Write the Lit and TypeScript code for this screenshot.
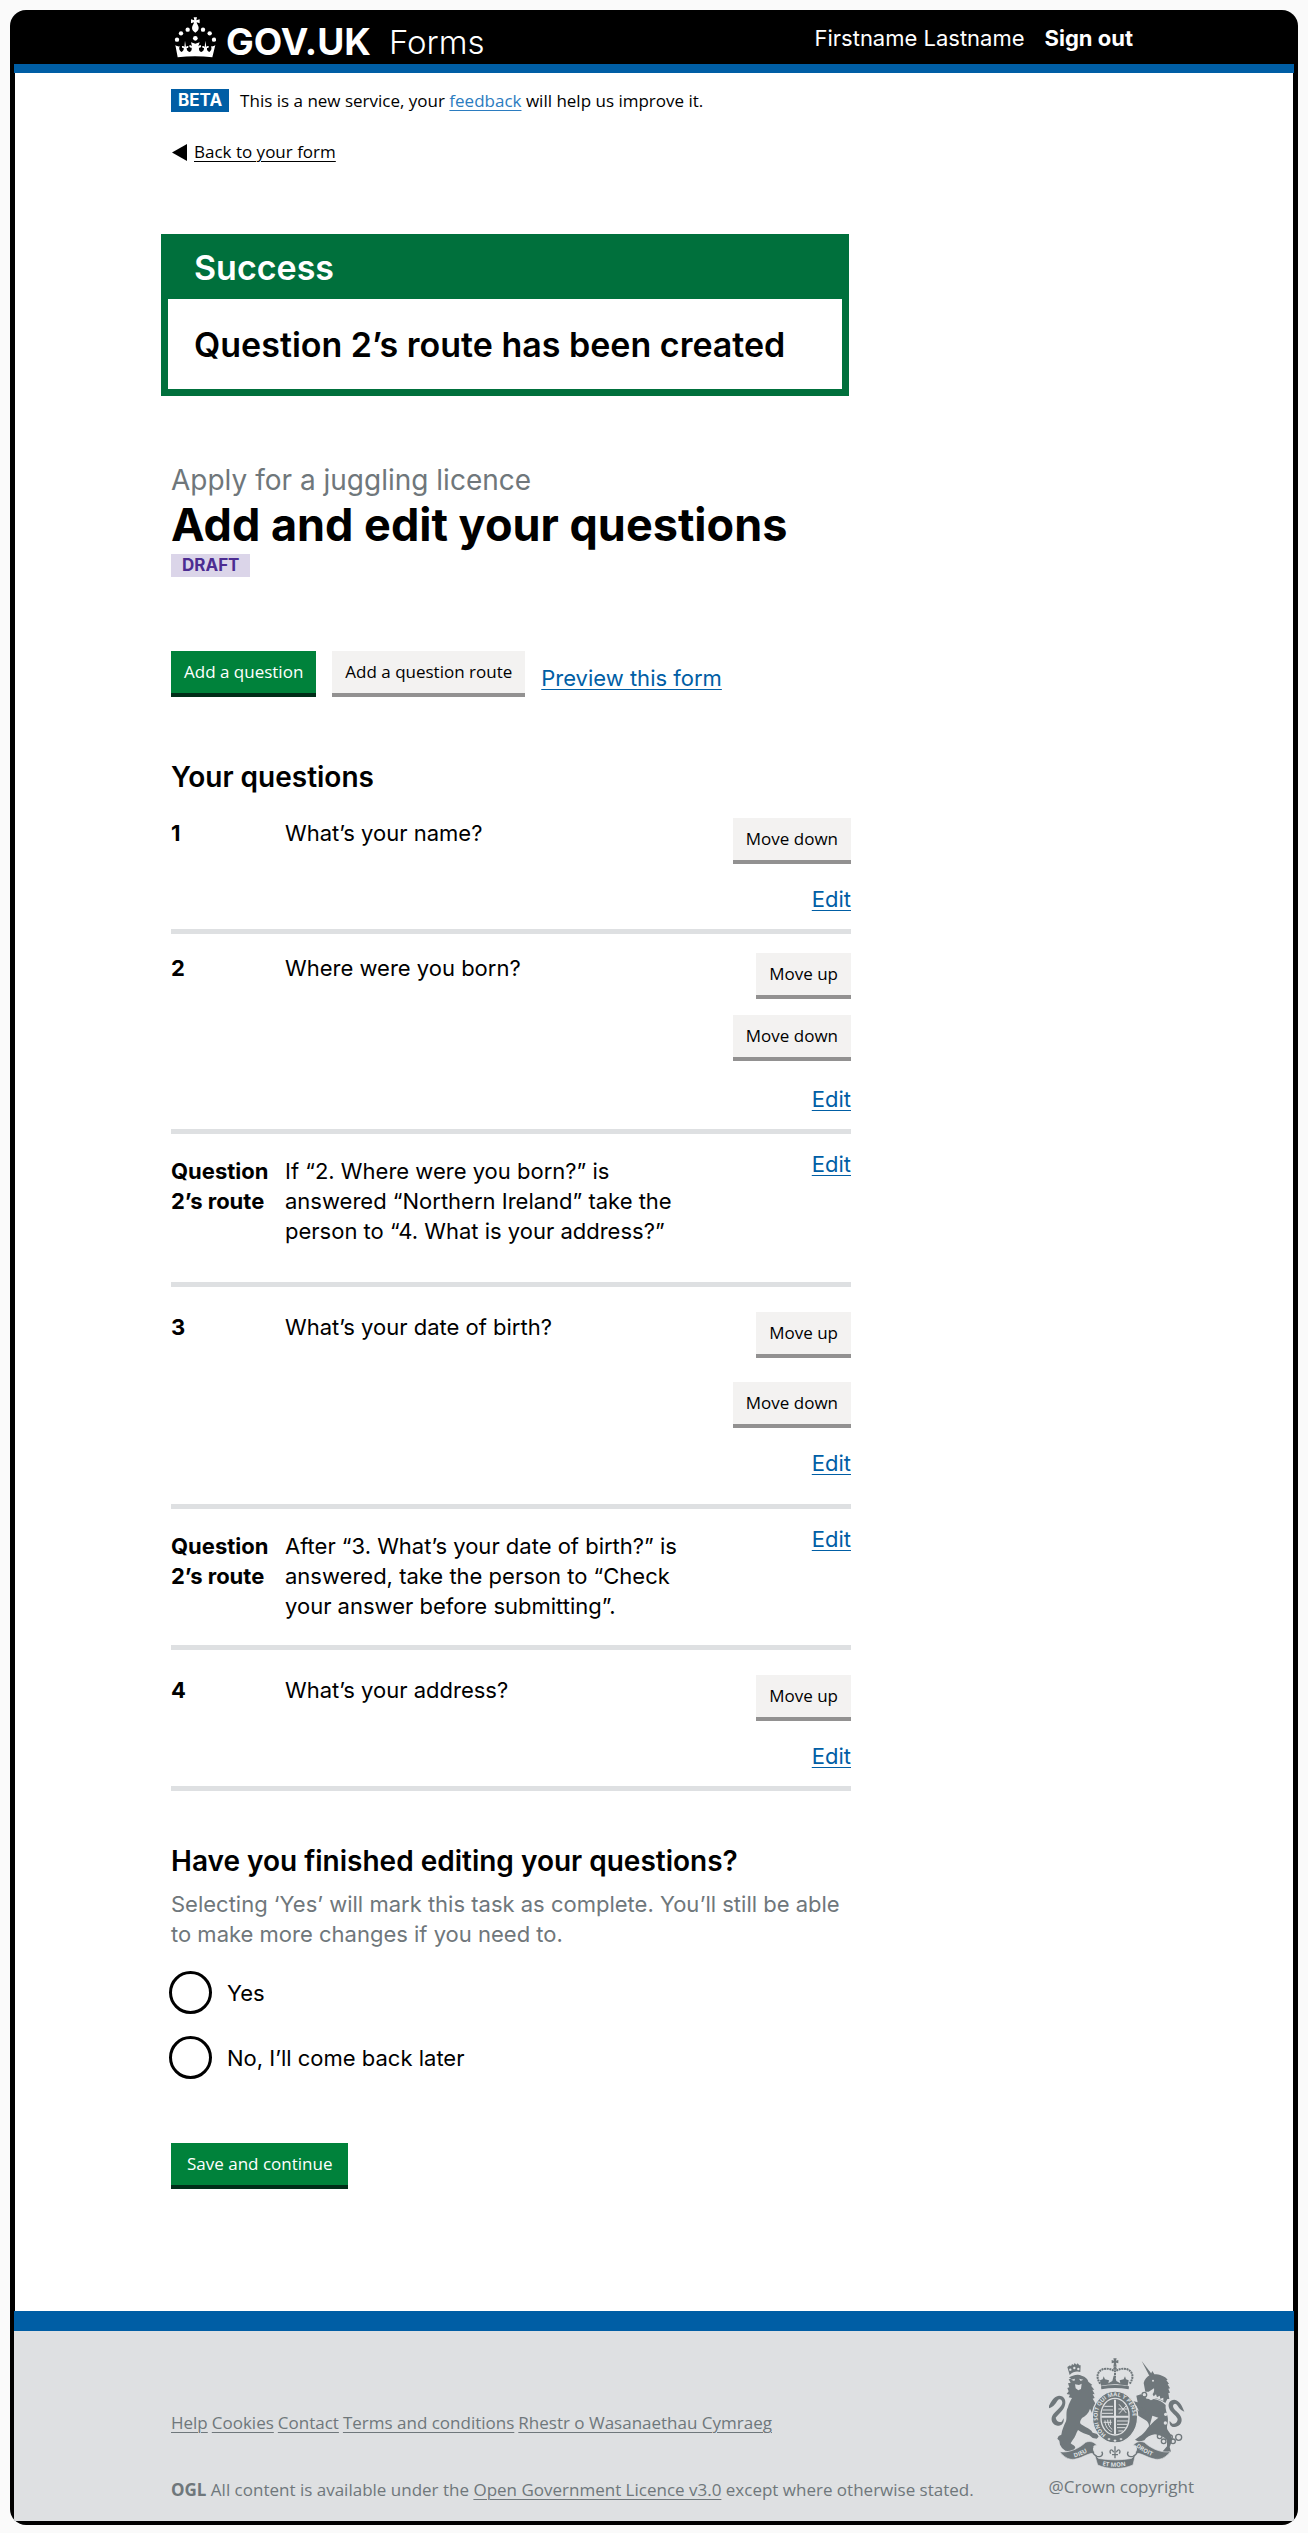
import { LitElement, html, css, svg, nothing } from "lit";
import { customElement, property, state } from "lit/decorators.js";
import { classMap } from "lit/directives/class-map.js";

type Spacing = "compact" | "roomy";

interface QuestionItem {
  kind: "question";
  number: number;
  text: string;
  up: boolean;
  down: boolean;
  spacing: Spacing;
}

interface RouteItem {
  kind: "route";
  label: string;
  text: string;
  spacing: Spacing;
}

type Item = QuestionItem | RouteItem;

const ITEMS: Item[] = [
  { kind: "question", number: 1, text: "What’s your name?", up: false, down: true, spacing: "compact" },
  { kind: "question", number: 2, text: "Where were you born?", up: true, down: true, spacing: "compact" },
  {
    kind: "route",
    label: "Question 2’s route",
    text: "If “2. Where were you born?” is answered “Northern Ireland” take the person to “4. What is your address?”",
    spacing: "roomy",
  },
  { kind: "question", number: 3, text: "What’s your date of birth?", up: true, down: true, spacing: "roomy" },
  {
    kind: "route",
    label: "Question 2’s route",
    text: "After “3. What’s your date of birth?” is answered, take the person to “Check your answer before submitting”.",
    spacing: "compact",
  },
  { kind: "question", number: 4, text: "What’s your address?", up: true, down: false, spacing: "roomy" },
];

const FOOTER_LINKS = ["Help", "Cookies", "Contact", "Terms and conditions", "Rhestr o Wasanaethau Cymraeg"];

const base = css`
  *,
  *::before,
  *::after {
    box-sizing: border-box;
  }
  h1,
  h2,
  p,
  ol,
  ul,
  fieldset,
  legend {
    margin: 0;
    padding: 0;
    border: 0;
  }
  a {
    color: #005ea5;
    text-decoration: underline;
    text-decoration-thickness: 1px;
    text-underline-offset: 3px;
  }
`;

const buttons = css`
  .button {
    display: block;
    height: 46px;
    padding: 0 13px;
    border: 0;
    border-bottom: 4px solid #929191;
    border-radius: 0;
    background: #f3f2f1;
    color: #000;
    font: 400 17px/42px "Open Sans", sans-serif;
    white-space: nowrap;
    cursor: pointer;
  }
  .button.primary {
    background: #00823b;
    border-bottom-color: #002d18;
    color: #fff;
  }
  .button.wide {
    padding: 0 16px;
  }
`;

@customElement("crown-logo")
export class CrownLogo extends LitElement {
  static styles = css`
    :host {
      display: block;
      width: 42px;
      height: 41px;
    }
    svg {
      display: block;
      width: 100%;
      height: 100%;
    }
  `;

  render() {
    return html`<svg viewBox="25 23 126 123" fill="#fff" aria-hidden="true">
      <path d="M84 24h10l-2 9 10-3v12l-9-3c0 5 6 10 6 17 0 6-5 11-10 14-5-3-10-8-10-14 0-7 6-12 6-17l-9 3V30l10 3z" />
      <circle cx="66" cy="61" r="6.5" /><circle cx="112" cy="61" r="6.5" />
      <circle cx="46" cy="72" r="6.5" /><circle cx="132" cy="72" r="6.5" />
      <circle cx="34" cy="91" r="6.5" /><circle cx="145" cy="91" r="6.5" />
      <circle cx="89" cy="87" r="7" />
      <path
        d="M29 107c5 4 9 5 13 4-3 7-1 13 5 17 6-2 8-7 7-12-4 1-6-2-5-6 4-1 6 0 7 3l2-19 3 19c1-3 4-4 7-3 1 5-1 7-5 6 0 6 2 10 8 12 6-2 8-7 7-13-5 1-8-2-7-7 4-1 6 1 8 3l-3-12 13 4 13-4-4 12c2-2 5-4 8-3 2 5-2 8-6 7-1 6 1 11 7 13 6-2 8-6 8-12-4 1-6-2-5-6 3-1 6 0 7 3l2-19 3 19c1-3 4-4 7-3 1 4-1 7-5 6-1 5 1 10 7 12 6-4 8-10 5-17 4 1 8 0 13-4l-9 37c-34-4-70-4-104 0z"
      />
    </svg>`;
  }
}

@customElement("royal-crest")
export class RoyalCrest extends LitElement {
  static styles = css`
    :host {
      display: block;
      width: 136px;
      height: 111px;
    }
    svg {
      display: block;
      width: 100%;
      height: 100%;
      overflow: visible;
    }
    .letters {
      font-family: "Open Sans", sans-serif;
      font-weight: 700;
      fill: #dee0e2;
    }
    .motto {
      font-size: 18px;
    }
    .garter {
      font-size: 17px;
    }
  `;

  private lion() {
    return svg`
      <g fill="#6f777b">
        <path d="M122 104l-7-24 8-5 3 3 3-7 5 3 3-6 5 5 4-4 5 6 4 0-1 20c-10-3-21-2-32 9z" />
        <path d="M120 112c8-6 26-12 38-6 12 4 18 10 20 18l12 10-4 2 10 12-6 0 7 14-6-1 6 12-6 2c6 8 10 18 12 30 0 10-3 18-4 26-8-6-12-18-16-26-4 14-14 22-24 28-4 6-8 12-4 18l16 10c8 4 16 8 20 16l14 4 4 8-6 6-12-2-10-8c-10-4-24-8-34-16-6 10-8 22-16 30l-6 10c4 4 12 6 14 12l-4 8-12 4-14-2-10-8-6-10-2-12-6-6 4-8 8-4c2-14 8-28 14-40 4-12-2-28 6-42 2-10 8-20 12-28l-10-2 4-8-10-2 6-8-4-10 6-2-4-12 8-2-6-10 8-2z" />
        <path d="M60 196c8-14 14-28 30-30 16 0 22 14 18 28-4 16-18 26-28 38 2 10 10 16 18 12l6-10c2 14-6 24-18 22-16-2-22-18-16-30 8-14 26-22 30-38 0-8-6-14-12-10-8 8-10 20-28 26z" />
      </g>
      <g fill="#dee0e2">
        <circle cx="124" cy="88" r="3.5" /><circle cx="136" cy="83" r="3.5" /><circle cx="148" cy="86" r="3.5" />
        <path d="M126 118l12-3-2 7zM150 115l13 3-8 4zM138 132l12 2 8-4-2 16-8 4-8-6z" />
      </g>`;
  }

  private unicorn() {
    return svg`
      <g fill="#6f777b">
        <path d="M338 62l34 44-8 6z" />
        <path d="M344 128c2-10 10-20 20-24l6-12 6 10c16 0 32 6 40 16l-4 2 8 10-4 2 7 12-5 1 5 12-5 1 3 18-6 0-6 12c-14-10-28-16-46-16 8-12 14-14 12-28l-16 10-10 0z" />
        <path d="M322 166l14-4 8 6 22 12 8-4c14 2 26 8 36 18-2 12 4 24 6 36 4 20-8 30 2 42 8 10 12 20 10 32l-6 16 4 14-14 6-12-6 14-16 0-18c-10-12-22-16-36-18-14 2-26 8-32 18l-16 4-12-6 14-10c14-8 20-20 28-30 0-8-4-14-10-18l-22-14c-8-4-8-12-6-20l8 6-8-16-14-6 4-8 14 4z" />
        <path d="M466 214c-6-16-14-34-30-36-14 0-20 12-16 24 4 14 22 22 26 34 0 10-8 16-16 14l-8-8c-2 12 6 20 16 18 16-2 24-16 18-30-6-14-22-20-24-32 0-6 6-10 10-6 8 8 8 16 24 22z" />
      </g>
      <g fill="#dee0e2">
        <circle cx="372" cy="121" r="3" />
        <path d="M352 170l8-8 4 6 6-8 4 8 7-6 3 9 8-5 2 9 9-3 0 10c-16-8-34-12-51-6z" />
        <path d="M370 226l18 6-12 10-14 14z" />
      </g>
      <g fill="none" stroke="#6f777b" stroke-width="4">
        <circle cx="346" cy="163" r="7" /><circle cx="340" cy="210" r="7" />
        <circle cx="392" cy="288" r="7" /><circle cx="404" cy="303" r="7" /><circle cx="424" cy="290" r="6" />
        <circle cx="432" cy="303" r="7" /><circle cx="449" cy="291" r="9" />
      </g>
      <g fill="#dee0e2"><circle cx="410" cy="222" r="5" /><circle cx="409" cy="248" r="5" /></g>`;
  }

  private crown() {
    return svg`
      <g fill="#6f777b">
        <path d="M253 54h10l-2 7 7-2v10l-7-2 2 12h-10l2-12-7 2V59l7 2z" />
        <circle cx="258" cy="84" r="5" />
        <path d="M213 120l8-3 3-9 4 9 12 3-2 9 12-7 4-16 4 0 4 16 12 7-2-9 12-3 4-9 3 9 8 3-3 16c-28-6-54-6-80 0z" />
        <path d="M216 138c28-5 56-5 84 0l-1 9c-28-5-54-5-82 0z" />
      </g>
      <g fill="none" stroke="#6f777b" stroke-width="6" stroke-dasharray="6 2">
        <path d="M214 130c-24-32 8-58 42-38" />
        <path d="M302 130c24-32-8-58-42-38" />
        <path d="M258 90v22" />
      </g>`;
  }

  private shield() {
    return svg`
      <ellipse cx="258" cy="230" rx="68" ry="78" fill="#6f777b" stroke="#dee0e2" stroke-width="4" />
      <path d="M216 224a42 50 0 0 1 84 0v10a42 50 0 0 1-84 0z" fill="#6f777b" stroke="#dee0e2" stroke-width="4" />
      <path d="M258 178v104M217 229h82" stroke="#dee0e2" stroke-width="6" />
      <g stroke="#dee0e2" stroke-width="3" fill="none">
        <path d="M226 198h26M221 209h31M219 219h33M264 242h33M264 252h31M264 262h26M268 272h14" />
        <path d="M270 192l22 26M292 196l-22 24M268 206h28" />
        <path d="M228 240c0 14 6 28 20 34M236 238c0 12 4 22 14 30M244 238v16M224 246h24" />
      </g>
      <path id="garter-path" d="M231 283A53 62 0 1 1 286 283" fill="none" />
      <text class="letters garter"><textPath href="#garter-path">HONI SOIT QUI MAL Y PENSE</textPath></text>
      <g fill="#dee0e2">
        <path d="M240 293l5 3-5 4-5-4zM258 297l5 4-5 4-5-4zM276 293l5 3-5 4-5-4z" />
      </g>`;
  }

  private ribbon() {
    return svg`
      <g fill="#6f777b" stroke="#dee0e2" stroke-width="2">
        <path d="M92 334c24 4 54-6 78-28 14-6 28 0 34 10-8-2-14 2-12 10l6 14c-20-6-44 20-72 17-14-2-26-12-34-23z" />
        <path d="M424 334c-24 4-54-6-78-28-14-6-28 0-34 10 8-2 14 2 12 10l-6 14c20-6 44 20 72 17 14-2 26-12 34-23z" />
        <path d="M196 340l12 14c32 6 68 6 100 0l12-14-8 34c-32 14-74 14-106 0z" />
      </g>
      <g fill="none" stroke="#6f777b" stroke-width="4">
        <path d="M192 318c-6 12-2 24 12 30 14 4 20-6 14-14M324 318c6 12 2 24-12 30-14 4-20-6-14-14" />
        <path d="M258 318v36M249 343h18M245 340c-6-12 4-16 9-4M271 340c6-12-4-16-9-4" />
      </g>
      <path id="ribbon-left" d="M136 351c20-4 40-14 60-30" fill="none" />
      <path id="ribbon-mid" d="M220 375c26 6 54 6 86 -1" fill="none" />
      <path id="ribbon-right" d="M320 319c20 16 42 28 66 34" fill="none" />
      <text class="letters motto"><textPath href="#ribbon-left">DIEU</textPath></text>
      <text class="letters motto"><textPath href="#ribbon-mid">ET MON</textPath></text>
      <text class="letters motto"><textPath href="#ribbon-right">DROIT</textPath></text>`;
  }

  render() {
    return html`<svg viewBox="60 53 408 333" role="img" aria-label="Royal coat of arms">
      ${this.lion()} ${this.unicorn()} ${this.crown()} ${this.shield()} ${this.ribbon()}
    </svg>`;
  }
}

@customElement("question-row")
export class QuestionRow extends LitElement {
  @property({ attribute: false }) item!: Item;

  static styles = [
    base,
    buttons,
    css`
      :host {
        display: block;
      }
      .row {
        display: grid;
        grid-template-columns: 100px minmax(0, 1fr) auto;
        column-gap: 14px;
        align-items: start;
        padding: 19px 0 15px;
        border-bottom: 5px solid #dee0e2;
      }
      .row.roomy {
        padding: 25px 0 15px;
      }
      .row.roomy.both {
        padding-bottom: 26px;
      }
      .row.route {
        padding: 15px 0 24px;
      }
      .row.route.roomy {
        padding-bottom: 36px;
      }
      .label {
        font-weight: 700;
        white-space: nowrap;
      }
      .text {
        max-width: 410px;
      }
      .route .label,
      .route .text {
        margin-top: 7px;
      }
      .route .label {
        white-space: normal;
      }
      .actions {
        display: flex;
        flex-direction: column;
        align-items: flex-end;
      }
      .button + .button {
        margin-top: 16px;
      }
      .roomy .button + .button {
        margin-top: 24px;
      }
      .button + a {
        margin-top: 20px;
      }
      .compact .button + .button + a {
        margin-top: 23px;
      }
    `,
  ];

  render() {
    const item = this.item;
    const isRoute = item.kind === "route";
    const classes = {
      row: true,
      route: isRoute,
      both: item.kind === "question" && item.up && item.down,
      compact: item.spacing === "compact",
      roomy: item.spacing === "roomy",
    };
    return html`<div class=${classMap(classes)}>
      <div class="label">${isRoute ? item.label : item.number}</div>
      <div class="text">${item.text}</div>
      <div class="actions">
        ${item.kind === "question" && item.up ? html`<button class="button" type="button">Move up</button>` : nothing}
        ${item.kind === "question" && item.down ? html`<button class="button" type="button">Move down</button>` : nothing}
        <a href="#edit">Edit</a>
      </div>
    </div>`;
  }
}

@customElement("app-root")
export class AppRoot extends LitElement {
  @state() private finished = "";

  static styles = [
    base,
    buttons,
    css`
      :host {
        display: block;
        min-height: 100vh;
        padding: 10px;
        box-sizing: border-box;
        background: #fafafa;
        color: #000;
        font: 400 22px/30px Inter, sans-serif;
      }
      .frame {
        padding: 0 4px 4px;
        border-radius: 16px;
        background: #000;
        overflow: hidden;
      }
      .bar {
        display: flex;
        align-items: flex-start;
        padding: 10px 100px 0 157px;
        border-bottom: 9px solid #005ea5;
        color: #fff;
      }
      .bar-inner {
        display: flex;
        align-items: flex-start;
        justify-content: space-between;
        flex: 1;
        max-width: 962px;
      }
      .brand {
        display: flex;
        align-items: flex-start;
        padding-left: 3px;
        color: #fff;
        text-decoration: none;
        line-height: 44px;
      }
      .logotype {
        margin-left: 10px;
        font-size: 37px;
        font-weight: 700;
      }
      .product {
        margin-left: 18px;
        font-size: 33px;
        font-weight: 300;
      }
      .brand crown-logo {
        margin-top: -3px;
      }
      .account {
        display: flex;
        gap: 20px;
        padding-top: 3px;
      }
      .account a {
        color: #fff;
        font-weight: 700;
        text-decoration: none;
      }
      .page {
        margin: 0 1px;
        padding: 16px 16px 122px 156px;
        background: #fff;
      }
      .column {
        max-width: 680px;
      }
      .phase {
        display: flex;
        gap: 11px;
        font: 400 17px/23px "Open Sans", sans-serif;
      }
      .phase a {
        color: #2b7cc0;
      }
      .tag {
        display: inline-block;
        padding: 0 7px;
        background: #005ea5;
        color: #fff;
        font: 700 17px/23px Inter, sans-serif;
      }
      .tag.draft {
        display: block;
        width: fit-content;
        margin-top: 2px;
        padding: 0 11px;
        background: #dbd5e9;
        color: #4c2c92;
      }
      .back {
        display: flex;
        align-items: center;
        gap: 7px;
        width: fit-content;
        margin-top: 28px;
        padding-left: 1px;
        color: #000;
        font: 400 17px/24px "Open Sans", sans-serif;
      }
      .back svg {
        width: 15px;
        height: 17px;
      }
      .notice {
        margin: 70px 2px 0 -10px;
        border: 7px solid #00703c;
        border-top: 0;
      }
      .notice h2 {
        padding: 14px 26px 11px;
        background: #00703c;
        color: #fff;
      }
      .notice p {
        padding: 26px 26px 24px;
      }
      .notice h2,
      .notice p {
        font-size: 34px;
        font-weight: 600;
        line-height: 40px;
      }
      .caption {
        margin-top: 67px;
        color: #6f777b;
        font-size: 28px;
        line-height: 35px;
      }
      h1 {
        font-size: 45px;
        font-weight: 700;
        line-height: 54px;
      }
      .toolbar {
        display: flex;
        align-items: flex-start;
        gap: 16px;
        margin-top: 74px;
      }
      .toolbar a {
        margin-top: 12px;
      }
      .subhead {
        font-size: 28px;
        font-weight: 600;
        line-height: 36px;
      }
      .list-title {
        margin: 62px 0 4px;
      }
      .questions {
        list-style: none;
      }
      fieldset {
        min-width: 0;
        margin-top: 52px;
      }
      .hint {
        margin-top: 10px;
        color: #6f777b;
      }
      .radios {
        display: flex;
        flex-direction: column;
        align-items: flex-start;
        gap: 22px;
        margin: 22px 0 0 -2px;
      }
      .radio {
        display: flex;
        align-items: center;
        gap: 15px;
      }
      .radio input {
        appearance: none;
        width: 43px;
        height: 43px;
        margin: 0;
        border: 3px solid #000;
        border-radius: 50%;
        background: #fff;
      }
      .radio input:checked {
        background: radial-gradient(#000 0 11px, #fff 12px);
      }
      .save {
        margin-top: 64px;
      }
      .foot {
        display: flex;
        padding: 27px 100px 19px 157px;
        border-top: 20px solid #005ea5;
        background: #dee0e2;
        color: #6f777b;
        font: 400 17px/24px "Open Sans", sans-serif;
      }
      .foot a {
        color: #6f777b;
      }
      .foot-inner {
        display: flex;
        flex: 1;
        justify-content: space-between;
        max-width: 1026px;
      }
      .legal {
        display: flex;
        flex-direction: column;
        gap: 43px;
        padding-top: 53px;
      }
      .links {
        display: flex;
        flex-wrap: wrap;
        gap: 4px;
        list-style: none;
      }
      .crown-copyright {
        display: flex;
        flex-direction: column;
        gap: 6px;
      }
    `,
  ];

  private pick(event: Event) {
    this.finished = (event.target as HTMLInputElement).value;
  }

  private radio(value: string, label: string) {
    return html`<div class="radio">
      <input
        type="radio"
        name="finished"
        id="finished-${value}"
        value=${value}
        .checked=${this.finished === value}
        @change=${this.pick}
      />
      <label for="finished-${value}">${label}</label>
    </div>`;
  }

  render() {
    return html`<div class="frame">
      <header class="bar">
        <div class="bar-inner">
          <a class="brand" href="#home">
            <crown-logo></crown-logo>
            <span class="logotype">GOV.UK</span>
            <span class="product">Forms</span>
          </a>
          <div class="account"><span>Firstname Lastname</span><a href="#sign-out">Sign out</a></div>
        </div>
      </header>

      <div class="page">
        <div class="column">
          <div class="phase">
            <strong class="tag">BETA</strong>
            <span>This is a new service, your <a href="#feedback">feedback</a> will help us improve it.</span>
          </div>
          <a class="back" href="#form">
            <svg viewBox="0 0 15 17" aria-hidden="true"><path d="M0 8.500L15 0v17z" fill="#000" /></svg>
            <span>Back to your form</span>
          </a>

          <main>
            <section class="notice" role="alert">
              <h2>Success</h2>
              <p>Question 2’s route has been created</p>
            </section>

            <p class="caption">Apply for a juggling licence</p>
            <h1>Add and edit your questions</h1>
            <strong class="tag draft">DRAFT</strong>

            <div class="toolbar">
              <button class="button primary" type="button">Add a question</button>
              <button class="button" type="button">Add a question route</button>
              <a href="#preview">Preview this form</a>
            </div>

            <h2 class="subhead list-title">Your questions</h2>
            <ol class="questions">
              ${ITEMS.map((item) => html`<li><question-row .item=${item}></question-row></li>`)}
            </ol>

            <form @submit=${(e: Event) => e.preventDefault()}>
              <fieldset>
                <legend class="subhead">Have you finished editing your questions?</legend>
                <p class="hint">
                  Selecting ‘Yes’ will mark this task as complete. You’ll still be able to make more changes if you need to.
                </p>
                <div class="radios">${this.radio("yes", "Yes")} ${this.radio("no", "No, I’ll come back later")}</div>
              </fieldset>
              <button class="button primary wide save" type="submit">Save and continue</button>
            </form>
          </main>
        </div>
      </div>

      <footer class="foot">
        <div class="foot-inner">
          <div class="legal">
            <ul class="links">
              ${FOOTER_LINKS.map((name) => html`<li><a href="#footer">${name}</a></li>`)}
            </ul>
            <p>
              <b>OGL</b> All content is available under the
              <a href="#licence">Open Government Licence v3.0</a> except where otherwise stated.
            </p>
          </div>
          <div class="crown-copyright">
            <royal-crest></royal-crest>
            <span>@Crown copyright</span>
          </div>
        </div>
      </footer>
    </div>`;
  }
}
